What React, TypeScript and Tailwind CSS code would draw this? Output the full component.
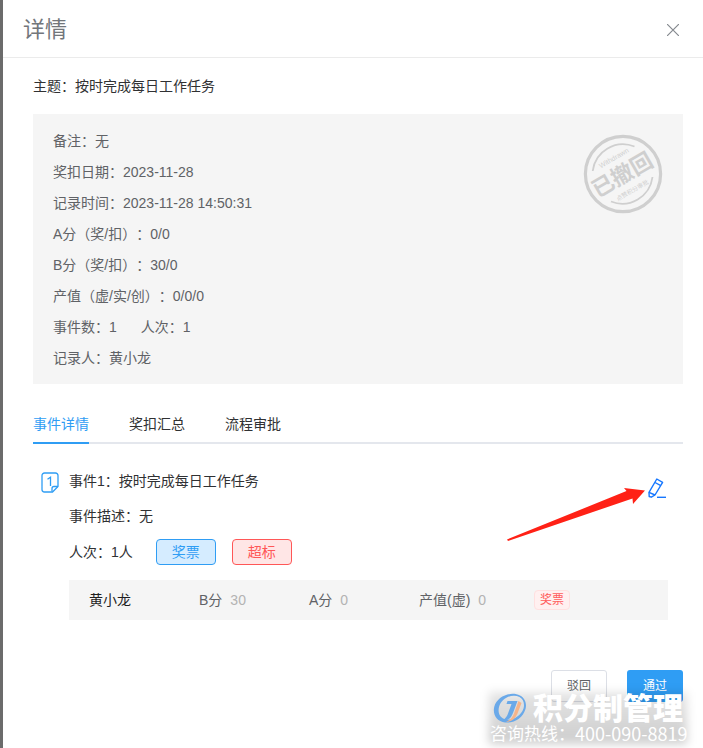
import { useState } from "react";

const details: string[][] = [
  ["备注：无"],
  ["奖扣日期：2023-11-28"],
  ["记录时间：2023-11-28 14:50:31"],
  ["A分（奖/扣）：0/0"],
  ["B分（奖/扣）：30/0"],
  ["产值（虚/实/创）：0/0/0"],
  ["事件数：1", "人次：1"],
  ["记录人：黄小龙"],
];

const tabs = ["事件详情", "奖扣汇总", "流程审批"];

function Stamp() {
  return (
    <svg
      className="absolute right-5 top-5 size-20"
      viewBox="0 0 80 80"
      fill="none"
      stroke="#cfcfcf"
      role="img"
      aria-label="已撤回"
    >
      <circle cx="40" cy="40" r="37.6" strokeWidth="3.2" />
      <path d="M9.700 37A30.500 30.500 0 0 1 51.500 12.500" strokeWidth="1.800" />
      <path d="M69.500 43A30.500 30.500 0 0 1 28 67.500" strokeWidth="1.800" />
      <g
        transform="rotate(-30 40 40)"
        fill="#cfcfcf"
        stroke="none"
        textAnchor="middle"
      >
        <text x="40" y="24" fontSize="7">
          Withdrawn
        </text>
        <text x="39" y="48" fontSize="22" fontWeight="700">
          已撤回
        </text>
        <text x="40" y="61" fontSize="6">
          点赞积分审批
        </text>
      </g>
    </svg>
  );
}

function NoteIcon() {
  return (
    <svg className="mt-2 h-[21px] w-[18px] shrink-0" viewBox="0 0 18 21" fill="none" stroke="#2f9df4" strokeWidth="1.300">
      <path d="M3.500 1h11A2.500 2.500 0 0 1 17 3.500V14.500L11.500 20H3.500A2.500 2.500 0 0 1 1 17.500V3.500A2.500 2.500 0 0 1 3.500 1Z" />
      <path d="M11 19.500V16.500A2 2 0 0 1 13 14.500H17" />
      <path d="M6.500 7.200L9.500 5.200V14" strokeWidth="1.300" />
    </svg>
  );
}

function PencilIcon() {
  return (
    <svg className="h-[21px] w-5" viewBox="0 0 20 21" fill="none" stroke="#1677ff" strokeWidth="1.400" strokeLinejoin="round">
      <path d="M8.800 1L14.600 4.300L7 17L3.300 19.200L1.200 18.500L1 14.400Z" />
      <path d="M7 4.500L12.800 7.700M1 14.400L7 17" />
      <path d="M9 19.300H18" />
    </svg>
  );
}

function Watermark() {
  return (
    <div className="pointer-events-none absolute bottom-0 right-3 h-14 w-[206px]">
      <div className="absolute inset-x-1 bottom-1 top-0 bg-linear-to-b from-black/10 to-black/20 blur-[5px]" />
      <div className="relative flex items-center gap-[6px] pl-2">
        <svg className="h-[30px] w-[34px] shrink-0" viewBox="0 0 34 30">
          <path
            fill="#6aa9e9"
            fillRule="evenodd"
            d="M27 2.500C18-2 4 3 1.200 14C-0.500 22 4 28.500 12 29.500C21 30.500 30 25 32.500 16C34 10.500 32 5 27 2.500ZM26.500 4C30.500 6 31.800 10.500 30.500 15.500C28 23 20 27.500 13 26.500C7 25.500 4.500 20 6 14C8.500 5 19 0.500 26.500 4Z"
          />
          <path d="M14.500 8H24.500L20 20C18 25.500 14 28.500 8 28C12.500 26 14 23.500 15.200 20L18.500 11H13.500Z" fill="#6aa9e9" />
          <path d="M25.500 8L28.500 10L24.500 20.500C22.500 25.500 19 28.500 13 29C17.500 27 19.500 24.500 21 20.500Z" fill="#f5b48a" />
        </svg>
        <span className="whitespace-nowrap pt-[2px] text-[30px] font-black leading-[30px] text-white">积分制管理</span>
      </div>
      <p className="relative -mt-[3px] flex items-center whitespace-nowrap pl-[5px] font-['Noto_Sans_CJK_SC',sans-serif] leading-6 text-white">
        <span className="text-[17px] leading-6">咨询热线：</span>
        <span className="text-lg leading-6">400-090-8819</span>
      </p>
    </div>
  );
}

export default function App() {
  const [active, setActive] = useState(0);
  return (
    <div
      lang="zh-CN"
      className="relative flex min-h-screen overflow-hidden bg-white font-['Liberation_Sans','Noto_Sans_CJK_SC',sans-serif] text-sm text-[#303133] [text-spacing-trim:space-all]"
    >
      <div className="w-[3px] shrink-0 bg-[#6b6b6b]" />
      <main className="min-w-0 flex-1">
        <header className="flex h-[58px] items-center justify-between border-b border-[#ebebeb] px-5 pt-[2px]">
          <h1 className="text-[22px] leading-8 text-[#72767b]">详情</h1>
          <button type="button" aria-label="关闭" className="flex size-5 items-center justify-center">
            <svg className="size-3" viewBox="0 0 12 12" stroke="#85898f" strokeWidth="1.200">
              <path d="M0 0L12 12M12 0L0 12" />
            </svg>
          </button>
        </header>

        <div className="pl-[30px] pr-5">
          <h2 className="py-[18px] leading-5">主题：按时完成每日工作任务</h2>

          <section className="relative bg-[#f5f5f5] px-5 pb-[10px] pt-3 leading-[31px] text-[#606266]">
            {details.map((row) => (
              <p key={row[0]} className="flex gap-6">
                {row.map((part) => (
                  <span key={part}>{part}</span>
                ))}
              </p>
            ))}
            <Stamp />
          </section>

          <div role="tablist" className="mt-5 flex h-10 gap-10 shadow-[inset_0_-2px_0_#e4e7ed]">
            {tabs.map((tab, i) => (
              <button
                key={tab}
                type="button"
                role="tab"
                aria-selected={i === active}
                onClick={() => setActive(i)}
                className={
                  i === active
                    ? "border-b-2 border-[#2f9df4] pt-[2px] text-[#2f9df4]"
                    : "border-b-2 border-transparent pt-[2px]"
                }
              >
                {tab}
              </button>
            ))}
          </div>

          <section className="flex gap-[10px] pl-2 pr-[15px] pt-5">
            <NoteIcon />
            <div className="min-w-0 flex-1">
              <div className="flex items-start justify-between">
                <h3 className="leading-[34px]">事件1：按时完成每日工作任务</h3>
                <button type="button" aria-label="编辑" className="mt-[14px]">
                  <PencilIcon />
                </button>
              </div>
              <p className="leading-[34px]">事件描述：无</p>
              <div className="flex items-center gap-4 pb-[15px] pt-[6px]">
                <span className="mr-[7px]">人次：1人</span>
                <button type="button" className="h-[26px] w-[60px] rounded border border-[#2f9df4] bg-[#d5ecff] leading-6 text-[#2f9df4]">
                  奖票
                </button>
                <button type="button" className="h-[26px] w-[60px] rounded border border-[#ff5757] bg-[#ffe6e6] leading-6 text-[#ff5757]">
                  超标
                </button>
              </div>
              <div className="flex h-10 items-center bg-[#f5f5f5] pl-5 text-[#606266]">
                <span className="w-[110px] text-[#1f1f1f]">黄小龙</span>
                <span className="w-[110px]">
                  B分<span className="ml-2 text-[#b3b3b3]">30</span>
                </span>
                <span className="w-[110px]">
                  A分<span className="ml-2 text-[#b3b3b3]">0</span>
                </span>
                <span className="w-[115px]">
                  产值(虚)<span className="ml-2 text-[#b3b3b3]">0</span>
                </span>
                <span className="h-5 w-9 rounded-sm border border-[#ffe0e0] bg-[#fff0f0] text-center text-xs leading-[18px] text-[#ff5b5b]">
                  奖票
                </span>
              </div>
            </div>
          </section>

          <footer className="mt-[50px] flex justify-end gap-5 text-xs">
            <button type="button" className="h-8 w-14 rounded-[3px] border border-[#dcdfe6] bg-white text-[#606266]">
              驳回
            </button>
            <button type="button" className="h-8 w-14 rounded-[3px] bg-[#2f9df4] text-white">
              通过
            </button>
          </footer>
        </div>
      </main>

      <svg className="pointer-events-none absolute right-[57px] top-[486px] h-14 w-[140px]" viewBox="0 0 140 56" fill="#ff2116">
        <path d="M1 53.500L120.500 5L118 2L139 4.500L127 18L126.500 12.500L2 55Z" />
      </svg>
      <Watermark />
    </div>
  );
}
